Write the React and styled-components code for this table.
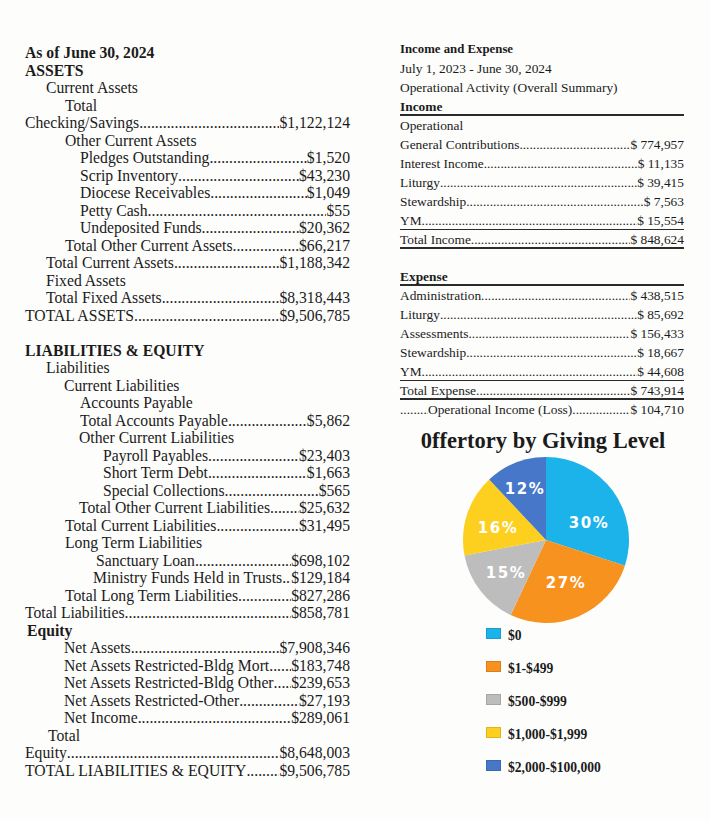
import React from "react";
import styled, { createGlobalStyle } from "styled-components";

const Global = createGlobalStyle`
  html, body { margin: 0; padding: 0; background: #fdfdfc; }
  body { font-family: "Liberation Serif", "Times New Roman", serif; color: #1b1b1b; }
`;

const Page = styled.div`
  width: 710px;
  height: 821px;
  display: flex;
  align-items: flex-start;
  overflow: hidden;
`;

const LeftCol = styled.div`
  width: 325px;
  padding: 44px 0 0 25px;
  font-size: 15.7px;
`;

const LRow = styled.div`
  display: flex;
  align-items: baseline;
  height: 17.5px;
  line-height: 17.5px;
  padding-left: ${(p) => p.$indent}px;
  font-weight: ${(p) => (p.$bold ? 700 : 400)};
  white-space: nowrap;
`;

const Leader = styled.span`
  flex: 1;
  overflow: hidden;
  white-space: nowrap;
  letter-spacing: 0;
  &::before {
    content: "........................................................................................................................................................";
  }
`;

const FixedLeader = styled.span`
  width: ${(p) => p.$w}px;
  overflow: hidden;
  white-space: nowrap;
  &::before {
    content: "......................";
  }
`;

const Value = styled.span`
  flex: none;
`;

const RightCol = styled.div`
  width: 284px;
  margin-left: 50px;
  padding-top: 40px;
  font-size: 13.4px;
`;

const RRow = styled.div`
  display: flex;
  align-items: baseline;
  height: 19px;
  line-height: 19px;
  font-weight: ${(p) => (p.$bold ? 700 : 400)};
  font-size: ${(p) => (p.$small ? 12.8 : 13.4)}px;
  border-bottom: ${(p) => (p.$rule ? `${p.$rule}px solid #2a2a2a` : "none")};
  white-space: nowrap;
  box-sizing: border-box;
`;

const Spacer = styled.div`
  height: ${(p) => p.$h}px;
`;

const ChartTitle = styled.div`
  margin-top: 9px;
  font-size: 22.5px;
  font-weight: 700;
  line-height: 25px;
  text-align: center;
  padding-left: 2px;
`;

const PieWrap = styled.div`
  margin: 2px 0 0 61px;
  width: 170px;
  height: 170px;
`;

const Legend = styled.div`
  margin: -6px 0 0 86px;
  display: flex;
  flex-direction: column;
`;

const LegendItem = styled.div`
  display: flex;
  align-items: center;
  height: 33px;
  font-size: 13.6px;
  font-weight: 700;
`;

const Swatch = styled.span`
  width: 15px;
  height: 11px;
  background: ${(p) => p.$c};
  border: 1px solid rgba(0, 0, 0, 0.12);
  box-sizing: border-box;
  margin-right: 7px;
  margin-top: -4px;
`;

const leftRows = [
  { t: "As of June 30, 2024", x: 0, b: 1 },
  { t: "ASSETS", x: 0, b: 1 },
  { t: "Current Assets", x: 21 },
  { t: "Total", x: 40 },
  { t: "Checking/Savings", x: 0, v: "$1,122,124" },
  { t: "Other Current Assets", x: 40 },
  { t: "Pledges Outstanding", x: 55, v: "$1,520" },
  { t: "Scrip Inventory", x: 55, v: "$43,230" },
  { t: "Diocese Receivables", x: 55, v: "$1,049" },
  { t: "Petty Cash ", x: 55, v: "$55" },
  { t: "Undeposited Funds", x: 55, v: "$20,362" },
  { t: "Total Other Current Assets", x: 40, v: "$66,217" },
  { t: "Total Current Assets", x: 21, v: "$1,188,342" },
  { t: "Fixed Assets", x: 21 },
  { t: "Total Fixed Assets", x: 21, v: "$8,318,443" },
  { t: "TOTAL ASSETS", x: 0, v: "$9,506,785" },
  { t: "" },
  { t: "LIABILITIES & EQUITY", x: 0, b: 1 },
  { t: "Liabilities", x: 21 },
  { t: "Current Liabilities", x: 39 },
  { t: "Accounts Payable", x: 55 },
  { t: "Total Accounts Payable", x: 55, v: "$5,862" },
  { t: "Other Current Liabilities", x: 54 },
  { t: "Payroll Payables", x: 78, v: "$23,403" },
  { t: "Short Term Debt", x: 78, v: "$1,663" },
  { t: "Special Collections", x: 78, v: "$565" },
  { t: "Total Other Current Liabilities", x: 54, v: "$25,632" },
  { t: "Total Current Liabilities", x: 40, v: "$31,495" },
  { t: "Long Term Liabilities", x: 40 },
  { t: "Sanctuary Loan", x: 71, v: "$698,102" },
  { t: "Ministry Funds Held in Trusts", x: 68, v: "$129,184" },
  { t: "Total Long Term Liabilities", x: 40, v: "$827,286" },
  { t: "Total Liabilities", x: 0, v: "$858,781" },
  { t: "Equity", x: 2, b: 1 },
  { t: "Net Assets", x: 39, v: "$7,908,346" },
  { t: "Net Assets Restricted-Bldg Mort", x: 39, v: "$183,748" },
  { t: "Net Assets Restricted-Bldg Other", x: 39, v: "$239,653" },
  { t: "Net Assets Restricted-Other", x: 39, v: "$27,193" },
  { t: "Net Income", x: 39, v: "$289,061" },
  { t: "Total", x: 23 },
  { t: "Equity", x: 0, v: "$8,648,003" },
  { t: "TOTAL LIABILITIES & EQUITY", x: 0, v: "$9,506,785" },
];

const slices = [
  { p: 30, c: "#1cb3ea", label: "30%", lx: 43, ly: -18 },
  { p: 27, c: "#f7921f", label: "27%", lx: 20, ly: 42 },
  { p: 15, c: "#bdbdbd", label: "15%", lx: -40, ly: 32 },
  { p: 16, c: "#fdd020", label: "16%", lx: -48, ly: -13 },
  { p: 12, c: "#4677c8", label: "12%", lx: -21, ly: -52 },
];

const legend = [
  { c: "#1cb3ea", t: "$0" },
  { c: "#f7921f", t: "$1-$499" },
  { c: "#bdbdbd", t: "$500-$999" },
  { c: "#fdd020", t: "$1,000-$1,999" },
  { c: "#4677c8", t: "$2,000-$100,000" },
];

function Pie() {
  const cx = 85, cy = 85, r = 83;
  let acc = 0;
  const pt = (deg) => {
    const a = (deg * Math.PI) / 180;
    return [cx + r * Math.sin(a), cy - r * Math.cos(a)];
  };
  return (
    <svg width="170" height="170" viewBox="0 0 170 170">
      {slices.map((s) => {
        const a0 = acc * 3.6;
        acc += s.p;
        const a1 = acc * 3.6;
        const [x0, y0] = pt(a0);
        const [x1, y1] = pt(a1);
        const large = a1 - a0 > 180 ? 1 : 0;
        return (
          <path
            key={s.label}
            d={`M${cx},${cy} L${x0},${y0} A${r},${r} 0 ${large} 1 ${x1},${y1} Z`}
            fill={s.c}
          />
        );
      })}
      {slices.map((s) => (
        <text
          key={"t" + s.label}
          x={cx + s.lx}
          y={cy + s.ly + 5.5}
          textAnchor="middle"
          fill="#fff"
          fontFamily="'DejaVu Sans', sans-serif"
          fontWeight="700"
          fontSize="15"
          letterSpacing="1.5"
        >
          {s.label}
        </text>
      ))}
    </svg>
  );
}

export default function App() {
  return (
    <>
      <Global />
      <Page>
        <LeftCol>
          {leftRows.map((r, i) => (
            <LRow key={i} $indent={r.x || 0} $bold={r.b}>
              {r.t}
              {r.v && (
                <>
                  <Leader />
                  <Value>{r.v}</Value>
                </>
              )}
            </LRow>
          ))}
        </LeftCol>
        <RightCol>
          <RRow $bold $small>Income and Expense</RRow>
          <RRow>July 1, 2023 - June 30, 2024</RRow>
          <RRow>Operational Activity (Overall Summary)</RRow>
          <RRow $bold $rule={2}>Income</RRow>
          <RRow>Operational</RRow>
          <RRow>General Contributions<Leader /><Value>$ 774,957</Value></RRow>
          <RRow>Interest Income<Leader /><Value>$ 11,135</Value></RRow>
          <RRow>Liturgy<Leader /><Value>$ 39,415</Value></RRow>
          <RRow>Stewardship<Leader /><Value>$ 7,563</Value></RRow>
          <RRow $rule={1}>YM<Leader /><Value>$ 15,554</Value></RRow>
          <RRow $rule={2}>Total Income<Leader /><Value>$ 848,624</Value></RRow>
          <Spacer $h={18} />
          <RRow $bold $rule={2}>Expense</RRow>
          <RRow>Administration<Leader /><Value>$ 438,515</Value></RRow>
          <RRow>Liturgy<Leader /><Value>$ 85,692</Value></RRow>
          <RRow>Assessments<Leader /><Value>$ 156,433</Value></RRow>
          <RRow>Stewardship<Leader /><Value>$ 18,667</Value></RRow>
          <RRow $rule={1}>YM<Leader /><Value>$ 44,608</Value></RRow>
          <RRow $rule={2}>Total Expense<Leader /><Value>$ 743,914</Value></RRow>
          <RRow><FixedLeader $w={28} />Operational Income (Loss)<Leader /><Value>$ 104,710</Value></RRow>
          <ChartTitle>0ffertory by Giving Level</ChartTitle>
          <PieWrap>
            <Pie />
          </PieWrap>
          <Legend>
            {legend.map((l) => (
              <LegendItem key={l.t}>
                <Swatch $c={l.c} />
                {l.t}
              </LegendItem>
            ))}
          </Legend>
        </RightCol>
      </Page>
    </>
  );
}
